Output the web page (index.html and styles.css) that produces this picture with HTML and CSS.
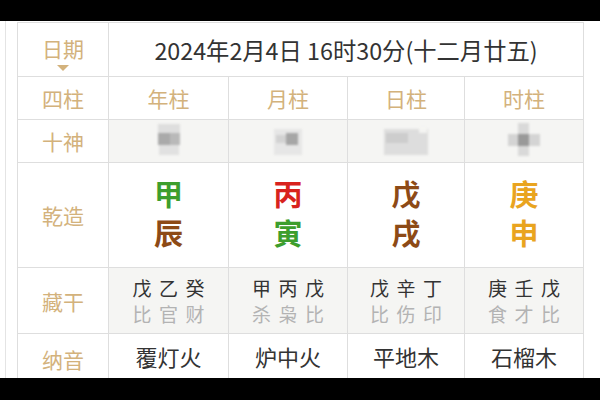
FILE: index.html
```html
<!DOCTYPE html>
<html lang="zh">
<head>
<meta charset="utf-8">
<link rel="stylesheet" href="styles.css">
</head>
<body>
<div class="bar-top"></div>
<div class="main">
  <div class="grid">
    <div class="cell label date-label"><span>日期</span><i class="tri"></i></div>
    <div class="cell date">2024年2月4日 16时30分(十二月廿五)</div>

    <div class="cell label">四柱</div>
    <div class="cell label">年柱</div>
    <div class="cell label">月柱</div>
    <div class="cell label">日柱</div>
    <div class="cell label">时柱</div>

    <div class="cell label">十神</div>
    <div class="cell shade"><svg width="40" height="36" viewBox="0 0 40 36" class="blob"><rect x="9" y="1" width="22" height="10" fill="#dedede"/><rect x="9" y="10" width="22" height="12" fill="#aaaaaa"/><rect x="21" y="10" width="10" height="12" fill="#b9b9b9"/><rect x="10" y="22" width="20" height="10" fill="#e1e1e1"/></svg></div>
    <div class="cell shade"><svg width="40" height="36" viewBox="0 0 40 36" class="blob"><rect x="6" y="6" width="28" height="26" fill="#e6e6e6"/><rect x="18" y="10" width="12" height="12" fill="#a6a6a6"/><rect x="8" y="12" width="10" height="8" fill="#d2d2d2"/></svg></div>
    <div class="cell shade"><svg width="50" height="36" viewBox="0 0 50 36" class="blob"><rect x="3" y="6" width="44" height="26" fill="#dddddd"/><rect x="5" y="10" width="22" height="10" fill="#cdcdcd"/><rect x="38" y="4" width="8" height="6" fill="#f4f4f2"/></svg></div>
    <div class="cell shade"><svg width="40" height="36" viewBox="0 0 40 36" class="blob"><rect x="14" y="0" width="11" height="33" fill="#d9d9d9"/><rect x="4" y="11" width="32" height="12" fill="#d4d4d4"/><rect x="14" y="11" width="11" height="12" fill="#999999"/></svg></div>

    <div class="cell label">乾造</div>
    <div class="cell pillar"><span class="wood">甲</span><span class="earth">辰</span></div>
    <div class="cell pillar"><span class="fire">丙</span><span class="wood">寅</span></div>
    <div class="cell pillar"><span class="earth">戊</span><span class="earth">戌</span></div>
    <div class="cell pillar"><span class="metal">庚</span><span class="metal">申</span></div>

    <div class="cell label">藏干</div>
    <div class="cell shade hidden"><span class="stems">戊乙癸</span><span class="gods">比官财</span></div>
    <div class="cell shade hidden"><span class="stems">甲丙戊</span><span class="gods">杀枭比</span></div>
    <div class="cell shade hidden"><span class="stems">戊辛丁</span><span class="gods">比伤印</span></div>
    <div class="cell shade hidden"><span class="stems">庚壬戊</span><span class="gods">食才比</span></div>

    <div class="cell label">纳音</div>
    <div class="cell nayin">覆灯火</div>
    <div class="cell nayin">炉中火</div>
    <div class="cell nayin">平地木</div>
    <div class="cell nayin">石榴木</div>
  </div>
</div>
<div class="bar-bottom"></div>
</body>
</html>
```
FILE: styles.css
```css
* { box-sizing: border-box; margin: 0; padding: 0; }
html, body { width: 600px; height: 400px; overflow: hidden; background: #fff; }
body { font-family: "Noto Sans CJK SC", "Noto Sans", sans-serif; }

.bar-top { height: 21px; background: #000; }
.bar-bottom { height: 22px; background: #000; }

.main {
  height: 357px;
  overflow: hidden;
  margin-left: 5px;
  border-left: 1px solid #e4e4e4;
  padding-left: 11px;
  padding-top: 1px;
}

.grid {
  display: grid;
  width: 567px;
  grid-template-columns: 91px 120px 119px 117px 119px;
  grid-template-rows: 54px 43px 43px 105px 66px 50px;
  border-left: 1px solid #dedede;
  border-top: 1px solid #dedede;
}

.cell {
  border-right: 1px solid #dedede;
  border-bottom: 1px solid #dedede;
  display: flex;
  align-items: center;
  justify-content: center;
  overflow: hidden;
}

.label { color: #d3b27c; font-size: 21px; }

.date-label { flex-direction: column; padding-top: 6px; }
.date-label span { line-height: 26px; }
.tri {
  display: block;
  width: 0; height: 0;
  margin-top: 4px;
  border-left: 6px solid transparent;
  border-right: 6px solid transparent;
  border-top: 6px solid #d3b27c;
}

.date { grid-column: span 4; font-size: 23.3px; color: #333; }

.shade { background: #f5f5f3; }
.blob { filter: blur(1.2px); }

.pillar { flex-direction: column; font-size: 29px; font-weight: 700; padding-bottom: 4px; }
.pillar span { display: block; height: 39px; line-height: 39px; }
.wood { color: #3d9e2d; }
.earth { color: #8d4a16; }
.fire { color: #d8221d; }
.metal { color: #e9a41f; }

.hidden { flex-direction: column; font-size: 19px; }
.hidden span { display: block; height: 26px; line-height: 26px; }
.stems { color: #333; letter-spacing: 7.5px; margin-right: -7.5px; }
.gods { color: #b3b3b3; letter-spacing: 7.5px; margin-right: -7.5px; }

.nayin { font-size: 22px; color: #333; align-items: flex-start; padding-top: 6px; }
```
